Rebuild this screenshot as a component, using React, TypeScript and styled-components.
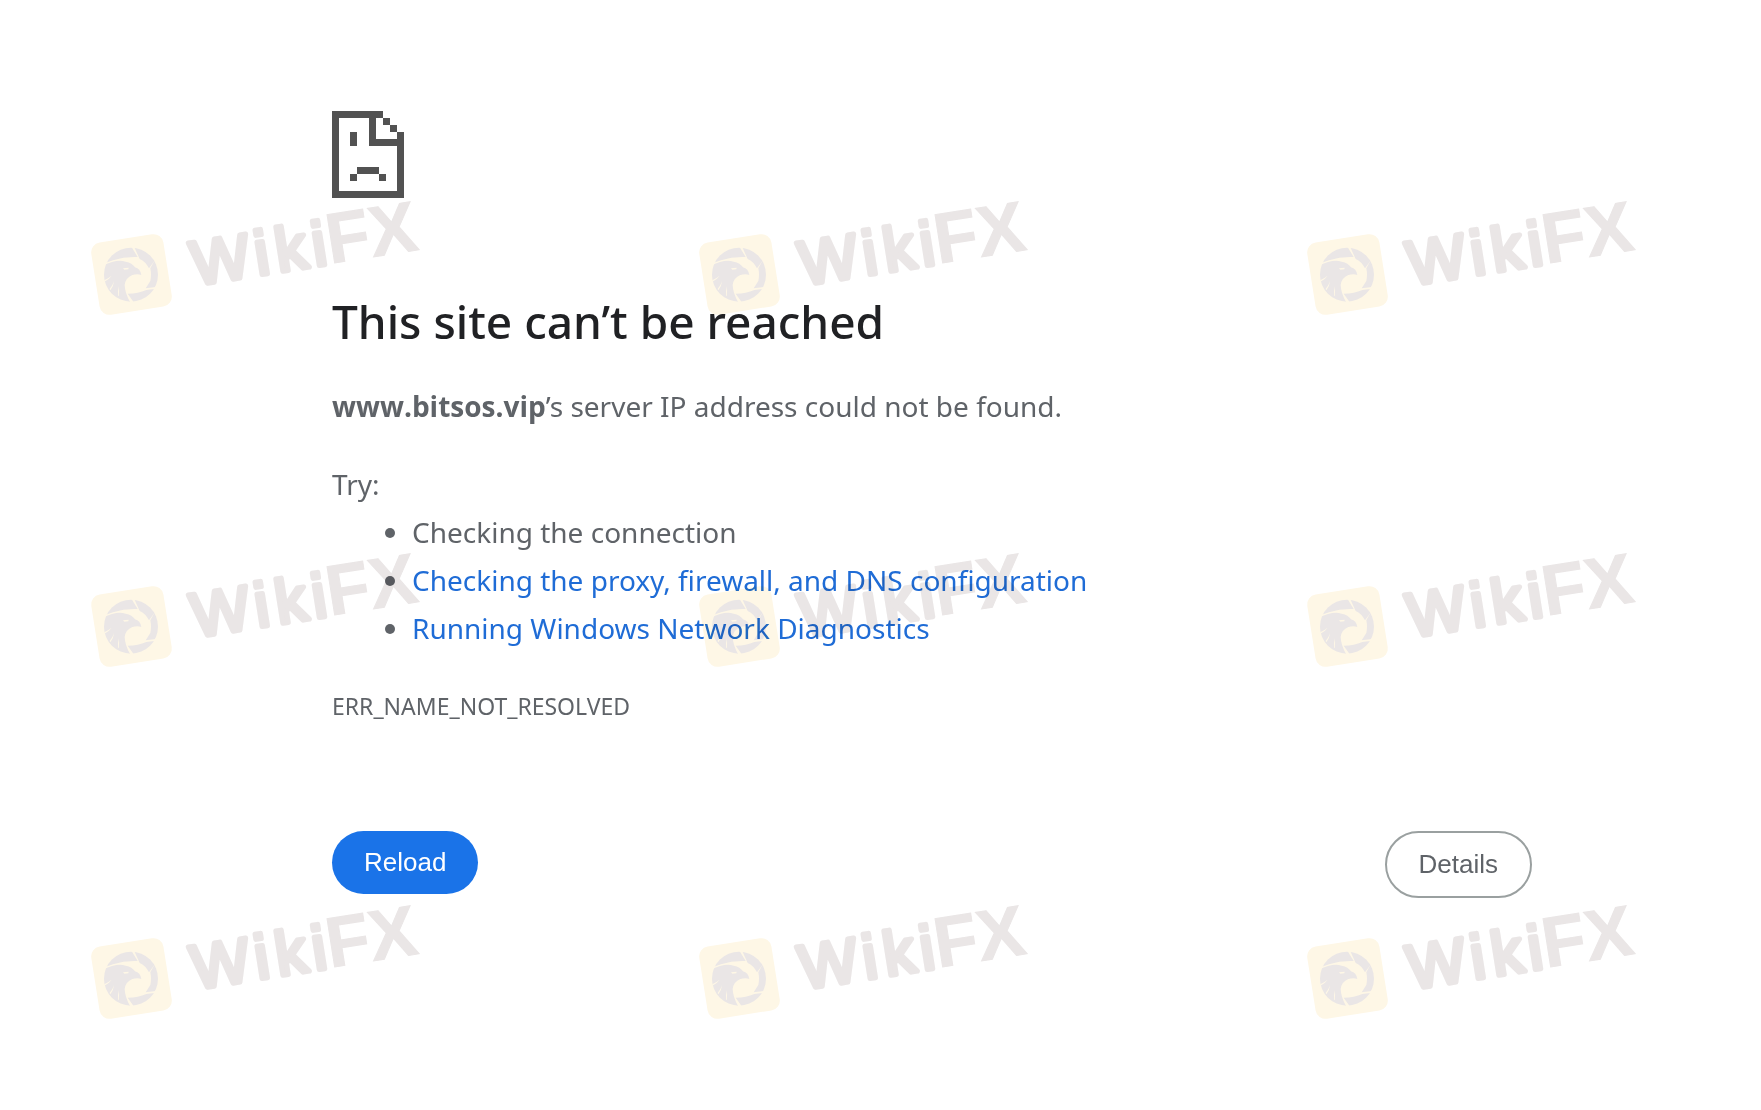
import React, { useId } from "react";
import styled, { createGlobalStyle } from "styled-components";

const GlobalStyle = createGlobalStyle`
  body { margin: 0; background: #fff; color: #5f6368; font-family: "Noto Sans", "Open Sans", sans-serif; }
`;

const Page = styled.div`
  position: relative;
  min-height: 100vh;
  overflow: hidden;
  box-sizing: border-box;
`;

const Main = styled.main`
  box-sizing: border-box;
  width: calc(100% - 560px);
  max-width: 1200px;
  margin-left: 332px;
  padding-top: 110px;
  font-size: 28px;
  line-height: 48px;
`;

const SadPage = styled.svg`
  display: block;
  width: 73px;
  height: 88px;
`;

const Title = styled.h1`
  margin: 94px 0 32px;
  font-size: 46px;
  font-weight: 500;
  line-height: 58px;
  color: #202124;
`;

const Text = styled.p`
  margin: 0 0 30px;
`;

const Host = styled.strong`
  font-family: "Open Sans", sans-serif;
`;

const Suggestions = styled.div`
  margin-bottom: 30px;
`;

const List = styled.ul`
  margin: 0;
  padding-left: 80px;
`;

const Link = styled.a`
  color: #1f6cd6;
  text-decoration: none;
`;

const ErrorCode = styled.div`
  font-size: 23px;
`;

const Actions = styled.div`
  display: flex;
  justify-content: space-between;
  align-items: flex-start;
  margin-top: 101px;
`;

const Button = styled.button<{ $primary?: boolean }>`
  border: ${(p) => (p.$primary ? "0" : "2px solid #9aa0a0")};
  border-radius: 34px;
  padding: 16px 32px;
  font: 26px/31px "Liberation Sans", Arial, sans-serif;
  color: ${(p) => (p.$primary ? "#fff" : "#5f6368")};
  background: ${(p) => (p.$primary ? "#1a73e8" : "#fff")};
  cursor: pointer;
`;

const Watermarks = styled.div`
  position: absolute;
  inset: 0;
  display: grid;
  grid-template-columns: repeat(3, 350px);
  grid-auto-rows: 180px;
  gap: 172px 258px;
  padding: 170px 80px;
  pointer-events: none;
  mix-blend-mode: multiply;
`;

const INK = "#eae6e6";
const CREAM = "#fef7e6";

const Mark = () => {
  const clip = useId();
  return (
    <svg width="350" height="180" viewBox="0 -20 350 180" aria-hidden="true">
      <rect x="15" y="48" width="73" height="73" rx="10" fill={CREAM} transform="rotate(-9 51.5 84.5)" />
      <g transform="translate(5 35) scale(0.3333)">
        <clipPath id={clip}>
          <circle cx="138" cy="149" r="81" />
        </clipPath>
        <g clipPath={`url(#${clip})`} fill={INK}>
          <path d="M50 60H136L158 96Q120 94 84 106L50 118Z" />
          <path d="M145 60H225V86L192 130Q182 110 164 102Z" />
          <path d="M213 98L230 100V184L182 190L196 168Q200 150 196 130Z" />
          <path d="M128 206Q160 206 184 195L225 190V240H152L142 226Z" />
          <path d="M40 130Q90 100 122 110Q142 114 150 127Q166 131 169 150Q158 145 142 150Q122 158 119 180Q120 206 138 236H40Z" />
        </g>
        <path d="M114 130L131 128L130 133L118 134ZM58 166Q70 160 80 152Q74 162 58 170ZM74 192Q84 180 87 168Q86 184 76 196ZM99 212Q98 198 102 184Q103 200 101 214Z" fill={CREAM} />
      </g>
      <g transform="translate(255 73) rotate(-9)" fill={INK} stroke={INK} fontFamily="'Liberation Sans', Arial, sans-serif">
        <text x="-142 -78 -57 -20" y="0" fontSize="62" strokeWidth="5" strokeLinejoin="round">Wiki</text>
        <text x="-5" y="0" fontSize="71" fontWeight="700" strokeWidth="1">FX</text>
      </g>
    </svg>
  );
};

export default function App() {
  return (
    <Page>
      <GlobalStyle />
      <Main>
        <SadPage viewBox="0 0 73 88" shapeRendering="crispEdges" aria-hidden="true">
          <path
            fill="#525252"
            d="M0 1H51V8H44V29H65V22H72V88H0ZM7 8V81H65V36H37V8ZM51 8H58V15H51ZM58 15H65V22H58ZM18 22H25V36H18ZM25 57H47V64H25ZM18 64H25V71H18ZM47 64H54V71H47Z"
          />
        </SadPage>
        <Title>This site can’t be reached</Title>
        <Text>
          <Host>www.bitsos.vip</Host>’s server IP address could not be found.
        </Text>
        <Suggestions>
          Try:
          <List>
            <li>Checking the connection</li>
            <li><Link href="#proxy">Checking the proxy, firewall, and DNS configuration</Link></li>
            <li><Link href="#diagnostics">Running Windows Network Diagnostics</Link></li>
          </List>
        </Suggestions>
        <ErrorCode>ERR_NAME_NOT_RESOLVED</ErrorCode>
        <Actions>
          <Button type="button" $primary>Reload</Button>
          <Button type="button">Details</Button>
        </Actions>
      </Main>
      <Watermarks>
        {Array.from({ length: 9 }, (_, i) => (
          <Mark key={i} />
        ))}
      </Watermarks>
    </Page>
  );
}
